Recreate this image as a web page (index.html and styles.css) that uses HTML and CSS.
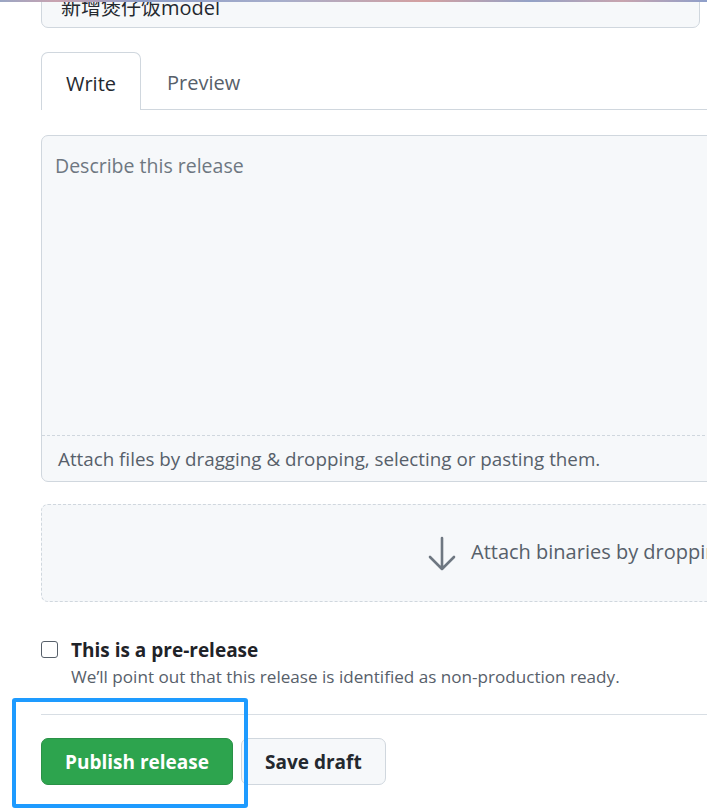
FILE: index.html
```html
<!DOCTYPE html>
<html lang="zh-CN">
<head>
<meta charset="utf-8">
<title>New release</title>
<link rel="stylesheet" href="styles.css">
</head>
<body>
<div class="topstrip"></div>
<main class="page">
  <div class="title-input">新增煲仔饭model</div>

  <div class="tabs">
    <div class="tab active">Write</div>
    <div class="tab">Preview</div>
    <div class="tab-fill"></div>
  </div>

  <div class="editor">
    <div class="editor-body">Describe this release</div>
    <div class="editor-foot">Attach files by dragging &amp; dropping, selecting or pasting them.</div>
  </div>

  <div class="binaries">
    <svg class="arrow" width="30" height="36" viewBox="0 0 30 36" aria-hidden="true">
      <path d="M15 2 V33 M3 21 L15 33 L27 21" fill="none" stroke="#6e7781" stroke-width="2.6" stroke-linecap="round" stroke-linejoin="round"/>
    </svg>
    <span>Attach binaries by dropping them here or selecting them.</span>
  </div>

  <div class="prerelease">
    <span class="checkbox"></span>
    <div class="pre-text">
      <div class="pre-label">This is a pre-release</div>
      <div class="pre-note">We’ll point out that this release is identified as non-production ready.</div>
    </div>
  </div>

  <div class="actions">
    <button class="btn btn-primary">Publish release</button>
    <button class="btn">Save draft</button>
  </div>
</main>
<div class="highlight"></div>
</body>
</html>
```
FILE: styles.css
```css
html, body {
  margin: 0;
  padding: 0;
  background: #ffffff;
  overflow: hidden;
  height: 811px;
}
body {
  font-family: "Open Sans", "Noto Sans CJK SC", sans-serif;
  color: #24292f;
  position: relative;
}
.topstrip {
  position: absolute;
  left: 0;
  top: 0;
  width: 707px;
  height: 2px;
  background: linear-gradient(90deg, #9aa6c4 0%, #c9a3b0 8%, #8f9fc8 20%, #a7aecb 40%, #d4a0a0 60%, #93a2c7 75%, #c8a4ae 88%, #8e9fca 100%);
  z-index: 2;
}
.page {
  width: 1400px;
  padding-left: 41px;
}
.title-input {
  box-sizing: border-box;
  width: 659px;
  height: 41px;
  margin-top: -13px;
  background: #f6f8fa;
  border: 1px solid #d0d7de;
  border-radius: 7px;
  padding: 0 19px;
  font-size: 20px;
  line-height: 39px;
  color: #24292f;
}
.tabs {
  display: flex;
  margin-top: 24px;
  height: 58px;
}
.tab {
  box-sizing: border-box;
  padding: 0 26px;
  font-size: 20px;
  line-height: 62px;
  color: #57606a;
  border-bottom: 1px solid #d0d7de;
}
.tab.active {
  width: 100px;
  text-align: center;
  padding: 0;
  color: #24292f;
  border: 1px solid #d0d7de;
  border-bottom: none;
  border-radius: 7px 7px 0 0;
}
.tab-fill {
  flex: 1;
  border-bottom: 1px solid #d0d7de;
}
.editor {
  margin-top: 25px;
  height: 347px;
  box-sizing: border-box;
  border: 1px solid #d0d7de;
  border-radius: 7px;
  background: #f6f8fa;
  display: flex;
  flex-direction: column;
}
.editor-body {
  flex: 1;
  padding: 17px 13px;
  font-size: 19.5px;
  line-height: 26px;
  color: #6e7781;
}
.editor-foot {
  height: 46px;
  box-sizing: border-box;
  border-top: 1px dashed #d0d7de;
  padding: 0 16px;
  font-size: 18.8px;
  line-height: 46px;
  color: #57606a;
  white-space: nowrap;
}
.binaries {
  margin-top: 22px;
  height: 98px;
  box-sizing: border-box;
  border: 1px dashed #d0d7de;
  border-radius: 7px;
  background: #f6f8fa;
  display: flex;
  align-items: center;
  padding-left: 385px;
  gap: 14px;
  font-size: 20px;
  line-height: 24px;
  color: #57606a;
  white-space: nowrap;
}
.binaries span {
  margin-top: -3px;
}
.arrow {
  display: block;
  margin-top: 1px;
}
.prerelease {
  margin-top: 36px;
  display: flex;
  gap: 13px;
}
.checkbox {
  width: 15px;
  height: 15px;
  border: 1.5px solid #57606a;
  border-radius: 3px;
  margin-top: 3px;
  background: #fff;
}
.pre-label {
  font-size: 19px;
  font-weight: 700;
  line-height: 24px;
  color: #1f2328;
}
.pre-note {
  margin-top: 4px;
  font-size: 17.1px;
  line-height: 22px;
  color: #57606a;
  white-space: nowrap;
}
.actions {
  margin-top: 26px;
  border-top: 1px solid #d8dee4;
  padding-top: 23px;
  display: flex;
  gap: 8px;
}
.btn {
  height: 47px;
  box-sizing: border-box;
  border: 1px solid #d0d7de;
  border-radius: 7px;
  background: #f6f8fa;
  font-family: inherit;
  font-size: 19px;
  font-weight: 700;
  color: #24292f;
  padding: 0 23px;
  white-space: nowrap;
}
.btn-primary {
  width: 192px;
  padding: 0;
  background: #2da44e;
  border-color: #2a9147;
  color: #ffffff;
}
.highlight {
  position: absolute;
  left: 12px;
  top: 698px;
  width: 228px;
  height: 102px;
  border: 4px solid #1e9bff;
  border-radius: 3px;
}
```
